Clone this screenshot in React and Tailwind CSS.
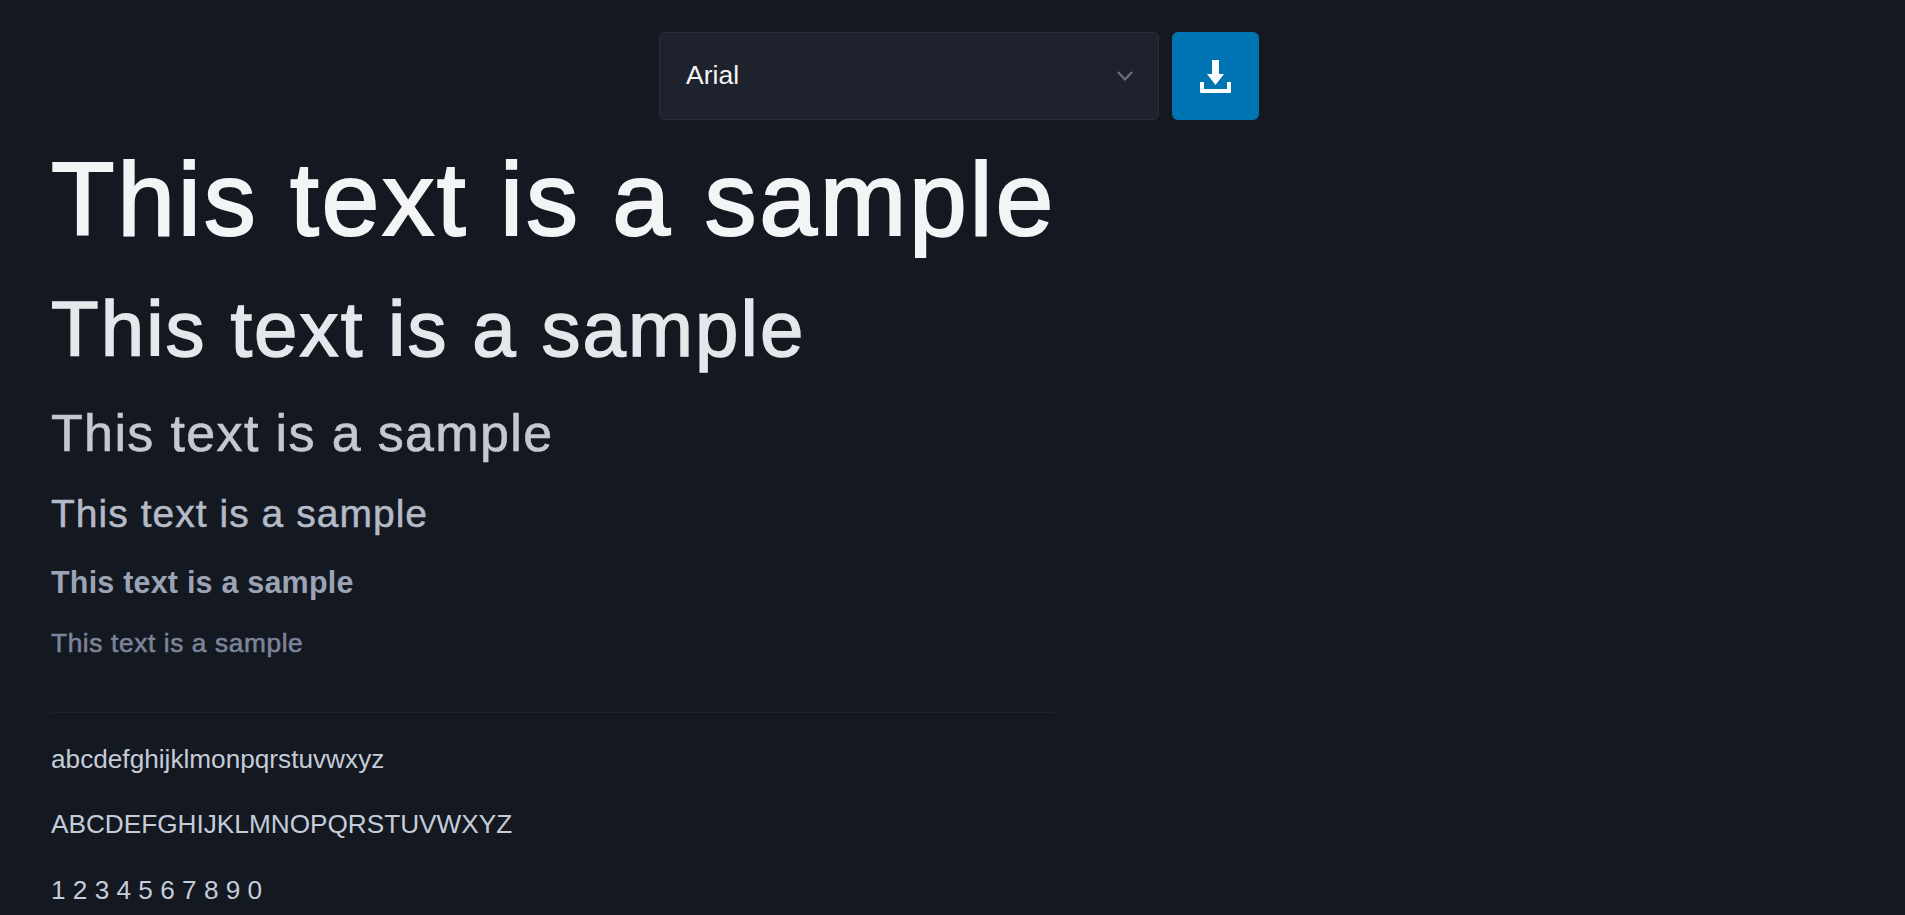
import React from 'react';

const SAMPLE = 'This text is a sample';

function DownloadIcon() {
  return (
    <svg width="31" height="33" viewBox="0 0 31 33" fill="#fff">
      <path d="M12 0h7v14h5L15.500 25 7 14h5z" />
      <path d="M0 22h4v7h23v-7h4v10a1 1 0 0 1-1 1H1a1 1 0 0 1-1-1z" />
    </svg>
  );
}

function Chevron() {
  return (
    <svg width="16" height="10" viewBox="0 0 16 10" fill="none" stroke="#6b7280" strokeWidth="2">
      <path d="M1 1l7 7.500L15 1" />
    </svg>
  );
}

export default function App() {
  return (
    <div className="min-h-screen bg-[#131821] font-['Liberation_Sans',Arial,sans-serif] overflow-hidden">
      <div className="flex justify-center gap-[13px] pt-8 pl-[13px]">
        <div className="w-[500px] h-[88px] flex items-center justify-between pl-[26px] pr-[25px] rounded-md border border-[#2b3040] bg-[#1e222d] text-[#f3f4f6] text-[26.500px]">
          <span>Arial</span>
          <Chevron />
        </div>
        <button className="w-[87px] h-[88px] flex items-center justify-center rounded-md bg-[#0074b3]">
          <DownloadIcon />
        </button>
      </div>

      <div className="w-[1004px] ml-[51px] mt-[15px]">
        <h1 className="whitespace-nowrap text-[104px] leading-[128px] tracking-[2.720px] text-[#f3f4f6] [-webkit-text-stroke:2px]">{SAMPLE}</h1>
        <h2 className="whitespace-nowrap text-[78px] leading-[132px] tracking-[2.070px] text-[#e5e7eb] [-webkit-text-stroke:1.500px]">{SAMPLE}</h2>
        <h3 className="text-[52px] leading-[76px] tracking-[1.360px] text-[#c5c8d2] [-webkit-text-stroke:0.600px]">{SAMPLE}</h3>
        <h4 className="text-[39px] leading-[85px] tracking-[1.030px] text-[#b4bac8] [-webkit-text-stroke:0.500px]">{SAMPLE}</h4>
        <h5 className="text-[30.500px] font-bold leading-[52px] tracking-[0.200px] text-[#9ca3b5]">{SAMPLE}</h5>
        <h6 className="text-[26.200px] leading-[70px] tracking-[0.650px] text-[#7b8499] [-webkit-text-stroke:0.600px]">{SAMPLE}</h6>
        <hr className="mt-[34px] border-[#1e222d]" />
        <div className="text-[26.200px] text-[#c5ccd9]">
          <p className="mt-[26px] leading-[40px]">abcdefghijklmonpqrstuvwxyz</p>
          <p className="mt-[25px] leading-[40px]">ABCDEFGHIJKLMNOPQRSTUVWXYZ</p>
          <p className="mt-[26px] leading-[40px]">1 2 3 4 5 6 7 8 9 0</p>
        </div>
      </div>
    </div>
  );
}
